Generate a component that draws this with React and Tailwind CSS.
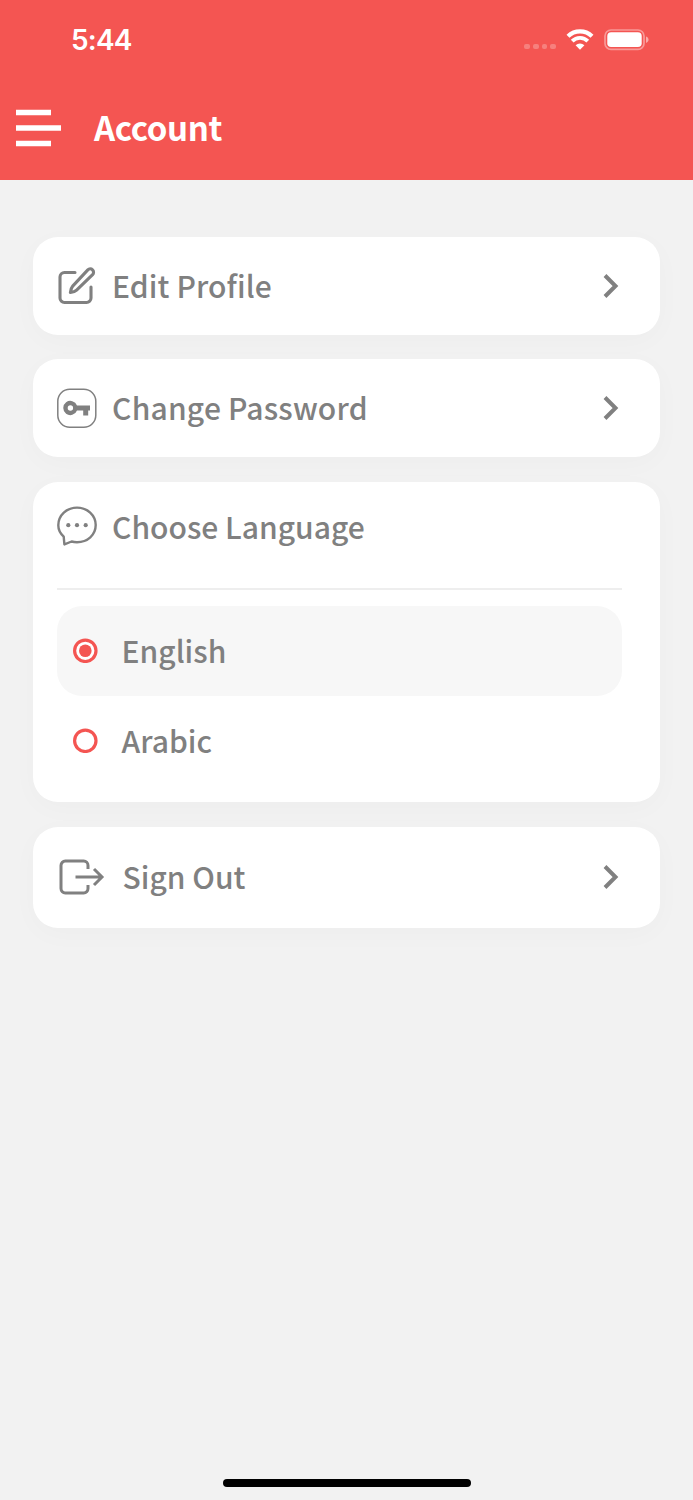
import React, { useState } from "react";

const languages = [
  { id: "en", label: "English" },
  { id: "ar", label: "Arabic" },
];

function StatusBar() {
  return (
    <div className="flex h-20 items-center justify-between pl-[71px] pr-[44px]">
      <span className="font-['Inter',sans-serif] text-[28px] font-semibold leading-none tracking-[-0.8px]">
        5:44
      </span>
      <div className="flex items-center">
        <div className="mr-[10px] mt-[13px] flex gap-[3px] opacity-25">
          {[0, 1, 2, 3].map((dot) => (
            <span key={dot} className="size-[5.7px] rounded-[2px] bg-white" />
          ))}
        </div>
        <svg width="28" height="22" viewBox="0 0 28 22" fill="none" stroke="white">
          <path d="M2 7.2a17.2 17.2 0 0 1 24 0" strokeWidth="4.2" />
          <path d="M6.2 12.2a11 11 0 0 1 15.6 0" strokeWidth="3.8" />
          <path
            d="M14 20.8l-4.4-4.5a6.2 6.2 0 0 1 8.8 0z"
            fill="white"
            stroke="none"
          />
        </svg>
        <svg className="ml-[10px]" width="45" height="22" viewBox="0 0 45 22">
          <rect
            x="1"
            y="1"
            width="39"
            height="19.4"
            rx="6"
            fill="none"
            stroke="white"
            strokeOpacity=".4"
            strokeWidth="1.7"
          />
          <rect x="3.3" y="3.3" width="34.4" height="14.8" rx="3.8" fill="white" />
          <path d="M42 7.6c3.4 1.3 3.4 5 0 6.4z" fill="white" fillOpacity=".5" />
        </svg>
      </div>
    </div>
  );
}

function Header() {
  return (
    <header className="h-[180px] bg-[#f45552] text-white">
      <StatusBar />
      <div className="flex h-24 items-center pl-4">
        <svg width="45" height="38" viewBox="0 0 45 38" fill="white">
          <path d="M0 .7h35v5.6H0zM0 16.2h45v5.6H0zM0 31.7h35v5.6H0z" />
        </svg>
        <h1 className="-mt-[2px] ml-[33px] text-[33px] font-bold leading-none tracking-[-0.4px]">
          Account
        </h1>
      </div>
    </header>
  );
}

function EditIcon() {
  return (
    <svg width="40" height="40" viewBox="0 0 40 40" fill="none" stroke="currentColor" strokeWidth="3.1" strokeLinecap="round" strokeLinejoin="round">
      <path d="M18 6.5H7.500a4.500 4.500 0 0 0-4.500 4.500v21a4.500 4.500 0 0 0 4.500 4.500h22a4.500 4.500 0 0 0 4.500-4.500V21" />
      <path d="M30.800 3.900a3.300 3.300 0 0 1 4.800 4.700L19.600 24.200c-1.500 1.400-4 2-6.200 2.300.3-2.200.8-4.800 2.300-6.400z" />
    </svg>
  );
}

function KeyIcon() {
  return (
    <svg width="40" height="40" viewBox="0 0 40 40">
      <rect x=".8" y="1.200" width="38" height="38" rx="12" fill="none" stroke="currentColor" strokeWidth="1.500" />
      <path
        fill="currentColor"
        fillRule="evenodd"
        d="M20 17.500h13v5h-1.800v5h-5v-5H20a7.100 7.100 0 1 1 0-5zM13.400 17.300a2.700 2.700 0 1 0 0 5.400 2.700 2.700 0 0 0 0-5.400z"
      />
    </svg>
  );
}

function ChatIcon() {
  return (
    <svg width="40" height="40" viewBox="0 0 40 40">
      <path
        fill="none"
        stroke="currentColor"
        strokeWidth="2.400"
        strokeLinejoin="round"
        d="M7.400 38.400l-.7-7.800C3.300 27.600 1.300 24 1.300 19.300 1.300 9.200 9.800 1.600 20 1.600s18.700 7.600 18.700 17.500S30.600 36.200 20 36.200c-1.900 0-3.700-.2-5.400-.7z"
      />
      <g fill="currentColor">
        <circle cx="11.300" cy="19.200" r="2.100" />
        <circle cx="20" cy="19.200" r="2.100" />
        <circle cx="28.700" cy="19.200" r="2.100" />
      </g>
    </svg>
  );
}

function SignOutIcon() {
  return (
    <svg className="ml-[2px]" width="46" height="36" viewBox="0 0 46 36" fill="none" stroke="currentColor" strokeWidth="3">
      <path d="M29 10V6.400a4.300 4.300 0 0 0-4.300-4.300H6.300A4.300 4.300 0 0 0 2 6.400v23.200a4.300 4.300 0 0 0 4.300 4.300h18.400a4.300 4.300 0 0 0 4.300-4.300V26" />
      <path d="M16.500 18h26M35 10l8 8-8 8" />
    </svg>
  );
}

function Chevron() {
  return (
    <svg width="18" height="26" viewBox="0 0 18 26" fill="none" stroke="currentColor" strokeWidth="4">
      <path d="M3 2.500L13.500 13 3 23.500" />
    </svg>
  );
}

function Card({ className, children }) {
  return (
    <section className={`rounded-[25px] bg-white shadow-[0_6px_28px_rgba(0,0,0,0.025)] ${className}`}>
      {children}
    </section>
  );
}

function LinkCard({ icon, label, height, text }) {
  return (
    <Card className={height}>
      <button className="flex h-full w-full items-center pl-6 pr-[40px]">
        {icon}
        <span className={`-mt-[2px] whitespace-nowrap ${text}`}>{label}</span>
        <span className="ml-auto">
          <Chevron />
        </span>
      </button>
    </Card>
  );
}

function Radio({ checked }) {
  return (
    <svg width="25" height="25" viewBox="0 0 25 25">
      <circle cx="12.300" cy="12.800" r="10.700" fill="white" stroke="#f45552" strokeWidth="3.200" />
      {checked && <circle cx="12.300" cy="12.800" r="6.300" fill="#f45552" />}
    </svg>
  );
}

function App() {
  const [language, setLanguage] = useState("en");

  return (
    <div className="flex h-[1500px] w-[693px] flex-col bg-[#f2f2f2] font-['Noto_Sans_CJK_SC',sans-serif]">
      <Header />
      <main className="flex flex-1 flex-col gap-[24.500px] px-[32.600px] pt-[56.500px] text-[30px] font-medium leading-none text-[#808080]">
        <LinkCard icon={<EditIcon />} label="Edit Profile" height="h-[98px]" text="ml-[15.500px] tracking-[0.1px]" />
        <LinkCard icon={<KeyIcon />} label="Change Password" height="h-[98px]" text="ml-[15.500px] tracking-[0.200px]" />
        <Card className="h-[320.500px] pl-6 pr-[38.400px] pt-6">
          <div className="flex h-10 items-center">
            <ChatIcon />
            <h2 className="ml-[15.500px] whitespace-nowrap">Choose Language</h2>
          </div>
          <div className="mt-[42px] h-[2px] bg-[#eeeeee]" />
          <div className="mt-4">
            {languages.map((item) => (
              <button
                key={item.id}
                onClick={() => setLanguage(item.id)}
                className={`flex h-[90px] w-full items-center rounded-[25px] pl-4 ${
                  language === item.id ? "bg-[#f7f7f7]" : ""
                }`}
              >
                <Radio checked={language === item.id} />
                <span className="-mt-px ml-6">{item.label}</span>
              </button>
            ))}
          </div>
        </Card>
        <LinkCard icon={<SignOutIcon />} label="Sign Out" height="h-[101px]" text="ml-[18px]" />
      </main>
      <div className="mx-auto mb-[13px] h-2 w-[248px] rounded-full bg-black" />
    </div>
  );
}

export default App;
